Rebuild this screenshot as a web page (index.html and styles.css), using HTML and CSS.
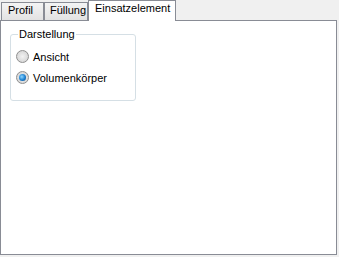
FILE: index.html
```html
<!DOCTYPE html>
<html>
<head>
<meta charset="utf-8">
<link rel="stylesheet" href="styles.css">
</head>
<body>
<div class="window">
  <div class="tabs">
    <div class="tab profil">Profil</div>
    <div class="tab fuellung">Füllung</div>
    <div class="tab active">Einsatzelement</div>
  </div>
  <div class="panel">
    <fieldset class="group">
      <legend class="legend">Darstellung</legend>
      <label class="option"><span class="radio"></span>Ansicht</label>
      <label class="option second"><span class="radio checked"></span>Volumenkörper</label>
    </fieldset>
  </div>
</div>
</body>
</html>
```
FILE: styles.css
```css
html, body {
  margin: 0;
  padding: 0;
  background: #f0f0f0;
  font-family: "Liberation Sans", Arial, sans-serif;
  font-size: 11px;
  color: #000;
}
.window {
  width: 337px;
}
.tabs {
  display: flex;
  align-items: flex-end;
  height: 21px;
  padding-left: 1px;
  position: relative;
  z-index: 1;
}
.tab {
  box-sizing: border-box;
  height: 18px;
  padding: 1px 0 0 6px;
  line-height: 13px;
  border: 1px solid #898c95;
  border-bottom: none;
  background: linear-gradient(#f4f4f4, #e2e2e2);
  margin-bottom: 1px;
  white-space: nowrap;
}
.tab.profil {
  width: 43px;
}
.tab.fuellung {
  width: 44px;
  padding-left: 5px;
}
.tab.active {
  width: 88px;
  height: 21px;
  margin-bottom: 0;
  background: #fff;
  padding-left: 6px;
}
.panel {
  box-sizing: border-box;
  height: 235px;
  border: 1px solid #898c95;
  background: #fff;
  margin-top: -1px;
  padding: 7px 0 0 9px;
}
.group {
  box-sizing: border-box;
  width: 126px;
  margin: 0;
  padding: 9px 0 16px 5px;
  border: 1px solid #d5dfe5;
  border-radius: 3px;
}
.legend {
  padding: 0 1px;
  margin-left: 2px;
  line-height: 13px;
}
.option {
  display: flex;
  align-items: center;
  gap: 4px;
  height: 13px;
}
.option.second {
  margin-top: 8px;
}
.radio {
  box-sizing: border-box;
  width: 13px;
  height: 13px;
  border-radius: 50%;
  border: 1px solid #8f8f8f;
  background: radial-gradient(circle at 50% 50%, #f2f2f2 0, #dcdcdc 60%, #cfcfcf 100%);
  display: flex;
  align-items: center;
  justify-content: center;
}
.radio.checked::after {
  content: "";
  width: 7px;
  height: 7px;
  border-radius: 50%;
  background: radial-gradient(circle at 40% 40%, #8fd6ff 0, #1a7fd0 55%, #0c3e7a 100%);
}
```
